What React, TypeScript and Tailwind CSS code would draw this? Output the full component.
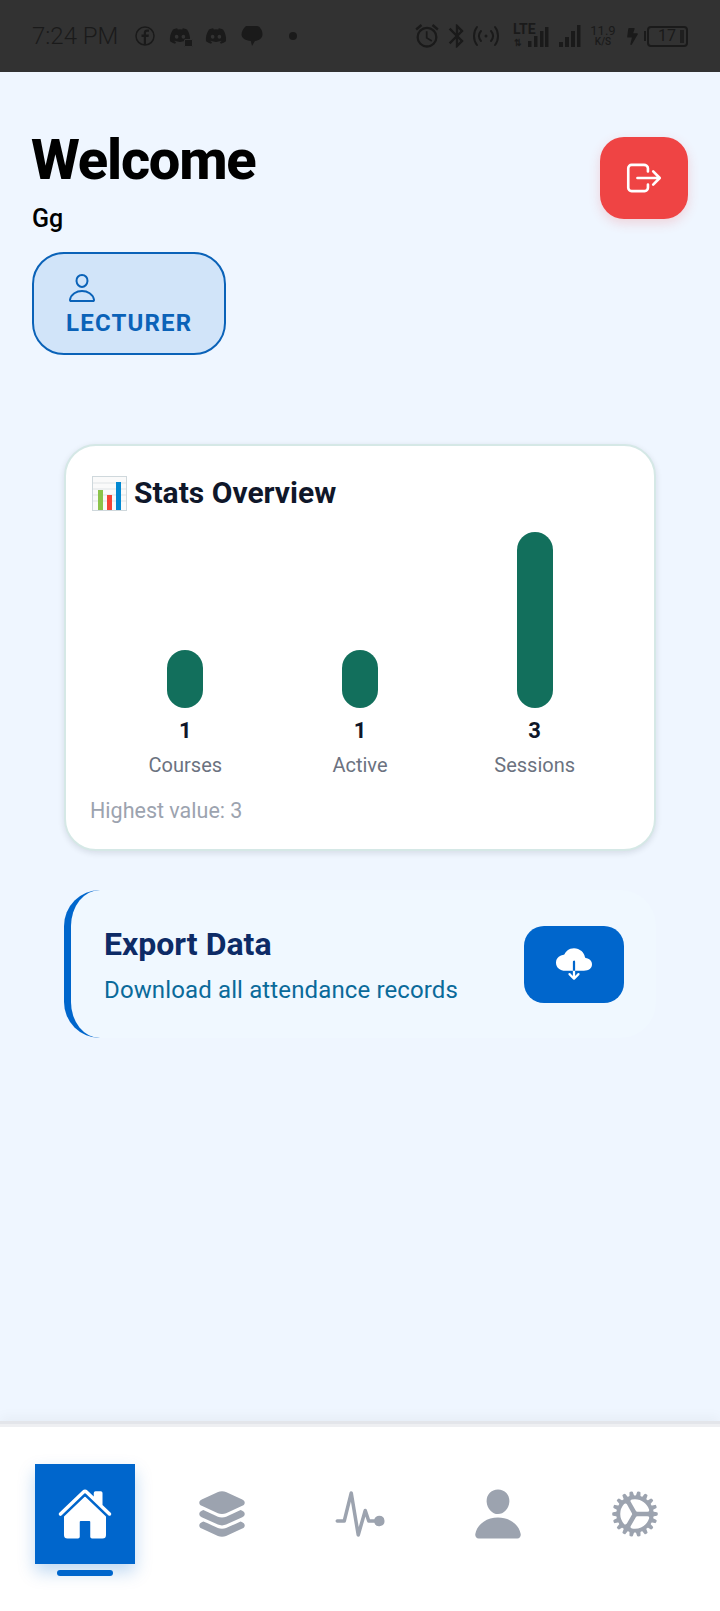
import React from "react";
import { IoHome, IoLayers, IoPulse, IoPerson, IoCog, IoCloudDownload, IoLogOutOutline, IoPersonOutline } from "react-icons/io5";
import { FaDiscord, FaBolt } from "react-icons/fa";
import { MdBluetooth, MdOutlineAlarm } from "react-icons/md";

const stats = [
  { label: "Courses", value: 1, height: 58 },
  { label: "Active", value: 1, height: 58 },
  { label: "Sessions", value: 3, height: 176 },
];

const SignalBars = () => (
  <svg width="22" height="22" viewBox="0 0 22 22" fill="#1a1a1a">
    <rect x="0" y="17" width="4" height="5" />
    <rect x="6" y="12" width="4" height="10" />
    <rect x="12" y="6" width="4" height="16" />
    <rect x="18" y="0" width="3.5" height="22" />
  </svg>
);

const ChartEmoji = () => (
  <svg width="35" height="35" viewBox="0 0 35 35" className="shrink-0">
    <rect x="0.5" y="0.5" width="34" height="34" fill="#fafafa" stroke="#cfd8dc" />
    <path d="M1 7h33M1 13h33M1 19h33M1 25h33" stroke="#e0e4e6" />
    <rect x="6" y="14" width="5" height="20" fill="#8bc34a" />
    <rect x="15" y="19" width="5" height="15" fill="#f44336" />
    <rect x="24" y="6" width="5" height="28" fill="#0288d1" />
  </svg>
);

const StatusBar = () => (
  <div className="h-[72px] bg-[#323232] flex items-center justify-between pl-[32px] pr-[32px] text-[#1a1a1a] shrink-0">
    <div className="flex items-center">
      <span className="text-[24px] w-[103px] whitespace-nowrap font-light">7:24 PM</span>
      <svg width="20" height="20" viewBox="0 0 20 20" fill="none" className="mr-[14px]">
        <circle cx="10" cy="10" r="9" stroke="#1a1a1a" strokeWidth="1.5" />
        <path d="M11 19v-8h2.500l.4-2.500H11V7c0-.8.3-1.300 1.400-1.300H14V3.600c-.4 0-1.100-.1-1.900-.1-2 0-3.300 1.200-3.300 3.300v1.700H6.500V11h2.300v8z" fill="#1a1a1a" />
      </svg>
      <span className="relative mr-[14px]">
        <FaDiscord size={22} />
        <span className="absolute right-[-2px] bottom-[0px] w-[9px] h-[8px] bg-[#1a1a1a] rounded-[1px] border border-[#323232]" />
      </span>
      <FaDiscord size={22} className="mr-[14px]" />
      <svg width="22" height="22" viewBox="0 0 22 22" fill="#1a1a1a">
        <path d="M5 1h11c1.500 0 3 1 3.500 2.500C21 5 21.500 7 21.500 9.500c0 3.500-3.500 6-7.500 6.500L11 21l-1.200-5C4.500 15.500.5 13 .5 9.500.5 7 2 3.500 5 1z" />
      </svg>
      <span className="w-[8px] h-[8px] rounded-full bg-[#1a1a1a] ml-[26px]" />
    </div>
    <div className="flex items-center">
      <MdOutlineAlarm size={28} />
      <MdBluetooth size={28} className="ml-[2px]" />
      <svg width="26" height="24" viewBox="0 0 26 24" fill="none" stroke="#1a1a1a" strokeWidth="2" strokeLinecap="round" className="ml-[2px]">
        <circle cx="13" cy="12" r="1.500" fill="#1a1a1a" stroke="none" />
        <path d="M8 7c-2.500 3-2.500 7 0 10M18 7c2.500 3 2.500 7 0 10M4 3C0 8 0 16 4 21M22 3c4 5 4 13 0 18" />
      </svg>
      <div className="relative ml-[14px] w-[36px] h-[22px]">
        <span className="absolute left-0 top-[-3px] text-[14px] leading-[14px] font-bold">LTE</span>
        <span className="absolute left-[1px] bottom-[-1px] text-[9px] leading-[9px] font-bold">⇅</span>
        <svg width="21" height="20" viewBox="0 0 21 20" fill="#1a1a1a" className="absolute right-0 bottom-0">
          <rect x="0" y="14" width="3.5" height="6" />
          <rect x="6" y="9" width="3.5" height="11" />
          <rect x="12" y="4" width="3.5" height="16" />
          <rect x="17" y="0" width="3.5" height="20" />
        </svg>
      </div>
      <div className="ml-[10px]">
        <SignalBars />
      </div>
      <div className="ml-[8px] w-[28px] flex flex-col items-center text-[13px] leading-[12px]">
        <span>11.9</span>
        <span className="text-[10px] leading-[10px] font-medium">K/S</span>
      </div>
      <FaBolt size={17} className="ml-[7px]" />
      <span className="ml-[3px] w-[2px] h-[10px] bg-[#1a1a1a]" />
      <div className="ml-[1px] w-[41px] h-[21px] rounded-[4px] border-2 border-[#1a1a1a] flex items-center justify-between pl-[9px] pr-[2px]">
        <span className="text-[16px] leading-none">17</span>
        <span className="w-[4px] h-[13px] bg-[#1f1f1f]" />
      </div>
    </div>
  </div>
);

const navItems = [IoLayers, IoPulse, IoPerson, IoCog];

export default function App() {
  return (
    <div className="w-[720px] h-[1611px] flex flex-col bg-[#eff6ff] overflow-hidden font-['Roboto',sans-serif]">
      <StatusBar />

      <main className="flex-1 flex flex-col">
        <div className="flex justify-between items-start pl-[32px] pr-[32px] pt-[55px]">
          <div>
            <h1 className="text-[56px] leading-[66px] font-extrabold tracking-[-1.2px] ml-[-1px] text-black">Welcome</h1>
            <p className="mt-[10px] text-[25px] leading-[32px] font-medium text-black">Gg</p>
            <div className="mt-[17px] w-[194px] h-[103px] rounded-[32px] border-2 border-[#0a62b8] bg-[#d1e4f9] pl-[32px] pt-[18px] text-[#0a62b8]">
              <IoPersonOutline size={32} />
              <div className="mt-[6px] text-[24px] leading-[26px] font-bold tracking-[1.2px]">LECTURER</div>
            </div>
          </div>
          <button className="mt-[10px] w-[88px] h-[82px] rounded-[24px] bg-[#ef4444] flex items-center justify-center shadow-[0_4px_12px_rgba(239,68,68,0.2)]">
            <IoLogOutOutline size={42} color="#ffffff" />
          </button>
        </div>

        <section className="mt-[89px] ml-[64px] w-[592px] h-[407px] rounded-[32px] border-2 border-[#d5e8e6] bg-white shadow-[0_2px_6px_rgba(15,23,42,0.12)] pl-[24px] pr-[24px] pt-[27px]">
          <div className="flex items-center gap-[7px] h-[40px] pl-[2px]">
            <ChartEmoji />
            <h2 className="text-[30px] leading-[40px] font-bold text-[#0f172a]">Stats Overview</h2>
          </div>
          <div className="mt-[19px] h-[176px] px-[8px] grid grid-cols-3 items-end">
            {stats.map((s) => (
              <div key={s.label} className="flex justify-center">
                <div className="w-[36px] rounded-[18px] bg-[#126f5c]" style={{ height: s.height }} />
              </div>
            ))}
          </div>
          <div className="grid grid-cols-3 mt-[9px] px-[8px]">
            {stats.map((s) => (
              <div key={s.label} className="flex flex-col items-center">
                <span className="text-[22px] leading-[28px] font-bold text-[#0f172a]">{s.value}</span>
                <span className="mt-[6px] text-[20px] leading-[28px] text-[#6b7280]">{s.label}</span>
              </div>
            ))}
          </div>
          <p className="mt-[18px] text-[21.5px] leading-[28px] text-[#9ca3af]">Highest value: 3</p>
        </section>

        <section className="mt-[39px] ml-[64px] w-[592px] h-[148px] rounded-[36px] border-l-[7px] border-[#0066cc] bg-[#f0f8ff] flex items-center justify-between pl-[33px] pr-[32px]">
          <div>
            <h2 className="text-[32px] leading-[40px] font-bold text-[#0d2b66] mt-[1px]">Export Data</h2>
            <p className="mt-[10px] text-[24px] leading-[32px] tracking-[0.13px] text-[#0a6a9a]">Download all attendance records</p>
          </div>
          <button className="w-[100px] h-[77px] rounded-[20px] bg-[#0066cc] flex items-center justify-center">
            <IoCloudDownload size={36} color="#ffffff" />
          </button>
        </section>
      </main>

      <nav className="h-[190px] shrink-0 bg-white border-t-[3px] border-[#e3e5ea] shadow-[inset_0_3px_0_#eeeff2,0_-4px_12px_rgba(0,0,0,0.04)] flex pl-[16px] pr-[16px] pt-[40px]">
        <div className="flex-1 flex flex-col items-center">
          <div className="w-[100px] h-[100px] bg-[#0066cc] flex items-center justify-center shadow-[0_8px_16px_rgba(0,102,204,0.25)]">
            <IoHome size={56} color="#ffffff" />
          </div>
          <div className="mt-[6px] w-[56px] h-[6px] rounded-full bg-[#0066cc]" />
        </div>
        {navItems.map((Icon, i) => (
          <div key={i} className="flex-1 flex justify-center">
            <div className="w-[100px] h-[100px] flex items-center justify-center">
              <Icon size={56} color="#9ca3af" />
            </div>
          </div>
        ))}
      </nav>
    </div>
  );
}
